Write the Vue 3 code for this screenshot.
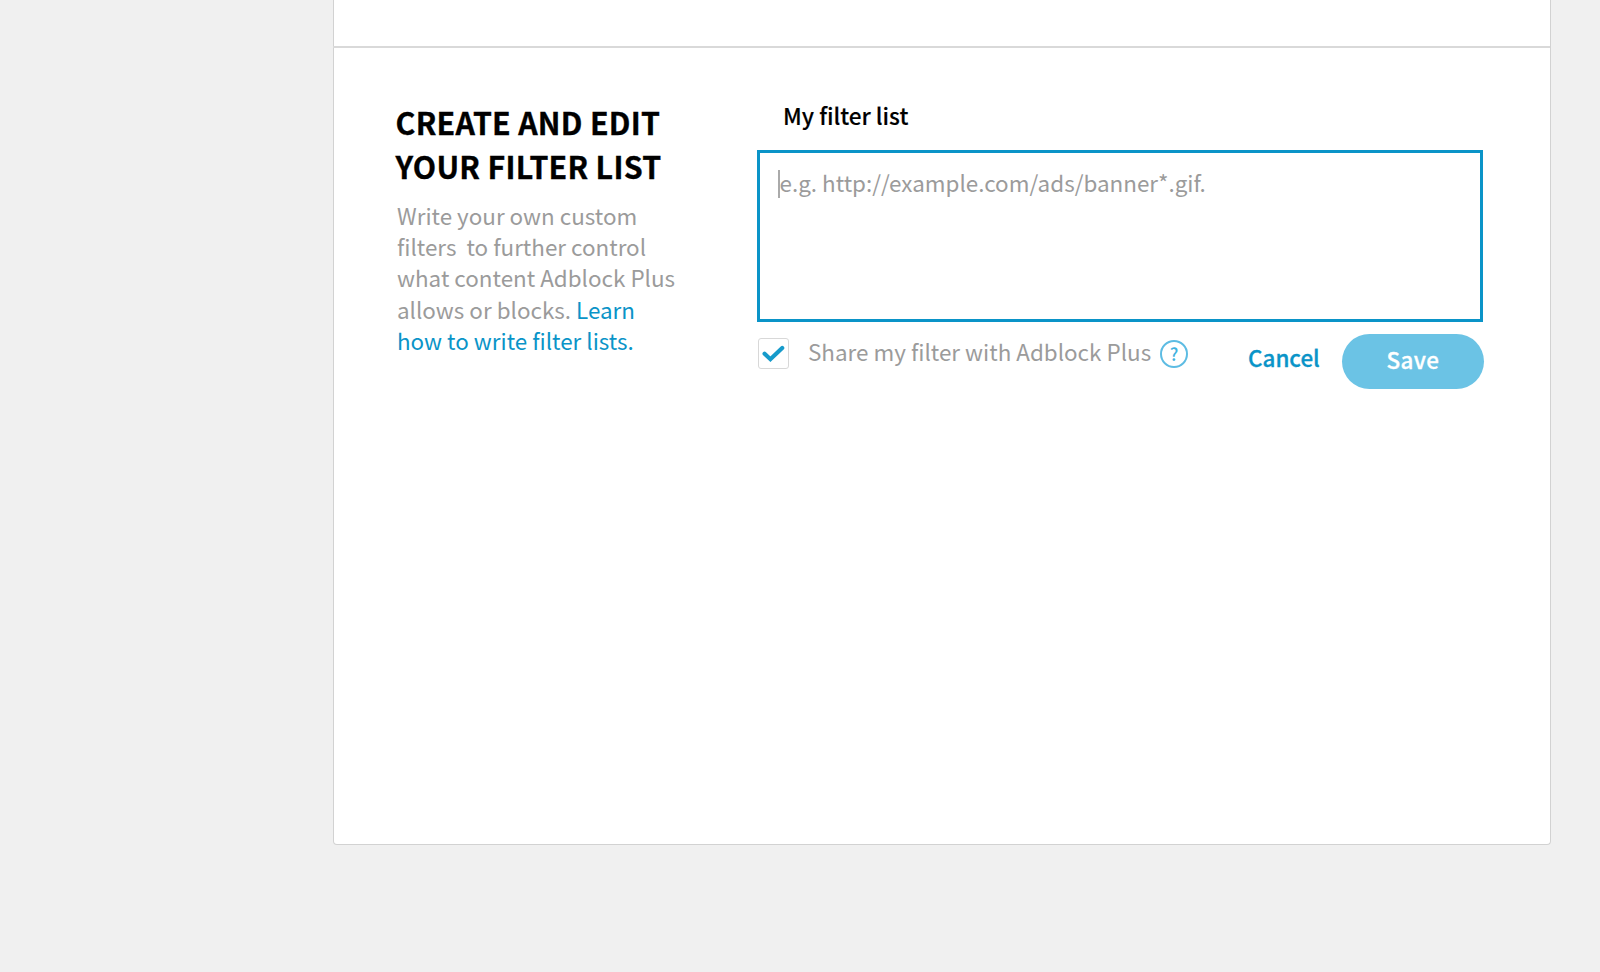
<script setup>
import { ref } from 'vue'

const shared = ref(true)
</script>

<template>
  <main class="page">
    <section class="card">
      <div class="previous"></div>
      <div class="editor">
        <div class="intro">
          <h2><span class="t1">CREATE AND EDIT</span><br /><span class="t2">YOUR FILTER LIST</span></h2>
          <p>
            Write your own custom<br />filters&nbsp; to further control<br />what content Adblock Plus<br />allows or blocks.
            <a>Learn<br />how to write filter lists.</a>
          </p>
        </div>
        <div class="form">
          <div class="label"><span>My filter list</span></div>
          <div class="field">
            <i class="caret"></i><span class="hint">e.g. http://example.com/ads/banner*.gif.</span>
          </div>
          <div class="actions">
            <div class="checkbox" @click="shared = !shared">
              <svg v-if="shared" width="23" height="18" viewBox="0 0 23 18">
                <path d="M2.6 8.8 L8.4 14.2 L20.2 3" fill="none" stroke="#169bcb" stroke-width="4.2" stroke-linecap="round" />
              </svg>
            </div>
            <span class="share">Share my filter with Adblock Plus</span>
            <div class="help"><span>?</span></div>
            <a class="cancel"><span>Cancel</span></a>
            <div class="save"><span>Save</span></div>
          </div>
        </div>
      </div>
    </section>
  </main>
</template>

<style>
body {
  background: #f0f0f0;
}
</style>

<style scoped>
.page {
  box-sizing: border-box;
  height: 972px;
  padding-left: 333px;
  overflow: hidden;
  font-family: "Noto Sans CJK SC", "Noto Sans", sans-serif;
  font-size: 22.43px;
  color: #9b9b9b;
  white-space: nowrap;
}
.card {
  box-sizing: border-box;
  width: 1218px;
  height: 845px;
  background: #fff;
  border: 1px solid #d2d2d2;
  border-top: 0;
  border-radius: 0 0 4px 4px;
}
.previous {
  box-sizing: border-box;
  height: 48px;
  border-bottom: 2px solid #d9d9d9;
  margin-left: -1px;
}
.editor {
  display: flex;
}
.intro {
  width: 360px;
  padding: 53px 0 0 62px;
  box-sizing: border-box;
}
h2 {
  margin: 0 0 0 -0.5px;
  font-size: 30.3px;
  line-height: 43.5px;
  letter-spacing: 0.28px;
  font-weight: 700;
  color: #000;
  -webkit-text-stroke: 0.35px #000;
}
p {
  margin: 12px 0 0 1px;
  line-height: 31.2px;
}
a {
  color: #0a94c8;
}
.form {
  margin-left: 62px;
  width: 728px;
  padding-top: 52px;
}
.label {
  padding-left: 27px;
  line-height: 32px;
  height: 50px;
  font-size: 22.6px;
  font-weight: 500;
  color: #000;
  -webkit-text-stroke: 0.15px #000;
}
.field {
  box-sizing: border-box;
  width: 726px;
  height: 172px;
  margin-left: 1px;
  border: 3px solid #0a94c8;
  display: flex;
  padding: 13px 0 0 18px;
  line-height: 32px;
}
.caret {
  width: 1.5px;
  height: 28px;
  margin-top: 4px;
  background: #aaa;
}
.actions {
  display: flex;
  align-items: flex-start;
}
.checkbox {
  box-sizing: border-box;
  width: 31px;
  height: 31px;
  margin: 16px 0 0 2px;
  border: 1px solid #d8d8d8;
  border-radius: 3px;
  display: flex;
  align-items: center;
  justify-content: center;
}
.share {
  margin: 13px 0 0 19px;
  line-height: 32px;
  width: 344px;
}
.help {
  box-sizing: border-box;
  width: 28px;
  height: 28px;
  margin: 18px 0 0 8px;
  border: 2px solid #5dbce3;
  border-radius: 50%;
  color: #3fb2df;
  font-size: 17.5px;
  line-height: 23px;
  font-weight: 500;
  text-align: center;
}
.cancel {
  margin: 19px 0 0 60px;
  width: 71px;
  line-height: 32px;
  font-weight: 500;
  -webkit-text-stroke: 0.3px #0a94c8;
}
.save {
  width: 142px;
  height: 55px;
  margin: 12px 0 0 23px;
  border-radius: 28px;
  background: #6bc3e5;
  color: #fff;
  font-weight: 500;
  letter-spacing: 0.4px;
  line-height: 50px;
  text-align: center;
  -webkit-text-stroke: 0.3px #fff;
}
</style>
